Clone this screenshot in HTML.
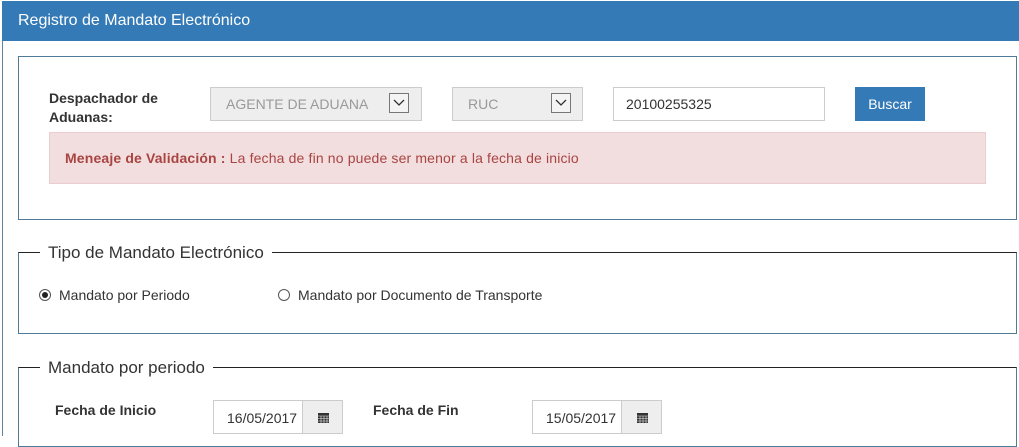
<!DOCTYPE html>
<html><head><meta charset="utf-8"><style>
*{box-sizing:border-box;margin:0;padding:0}
body{width:1019px;height:436px;overflow:hidden;background:#fff;font-family:"Liberation Sans",sans-serif;font-size:14px;color:#333;position:relative}
.a{position:absolute}
.hdr{left:2px;top:1px;width:1017px;height:40px;background:#337ab7;color:#fff;font-size:16px;padding:11px 16px}
.lb{left:2px;top:41px;width:1px;height:395px;background:#5a86a8}
.box{border:1px solid #4f7b99}
.sel{background:#eee;border:1px solid #ccc;color:#999;font-size:14px;padding:8px 15px}
.arr{position:absolute;top:5px;width:20px;height:20px;border:1px solid #777;background:#f4f4f4}
.arr svg{display:block}
.fs{border:1px solid #4f7b99;border-top:1px solid #222}
.lg{background:#fff;font-size:17px;color:#333;padding:0 8px}
.inp{border:1px solid #ccc;background:#fff;font-size:14px;color:#333}
.cal{background:#eee;border:1px solid #ccc}
</style></head><body>
<div class="a hdr">Registro de Mandato Electrónico</div>
<div class="a lb"></div>
<div class="a box" style="left:18px;top:56px;width:999px;height:164px"></div>
<div class="a" style="left:49px;top:89px;font-weight:bold;font-size:14px;line-height:19px">Despachador de<br>Aduanas:</div>
<div class="a sel" style="left:210px;top:87px;width:212px;height:34px">AGENTE DE ADUANA<div class="arr" style="left:178px"><svg width="18" height="18"><path d="M4 6 L9 11 L14 6" fill="none" stroke="#333" stroke-width="1.3"/></svg></div></div>
<div class="a sel" style="left:452px;top:87px;width:131px;height:34px">RUC<div class="arr" style="left:98px"><svg width="18" height="18"><path d="M4 6 L9 11 L14 6" fill="none" stroke="#333" stroke-width="1.3"/></svg></div></div>
<div class="a inp" style="left:613px;top:87px;width:212px;height:34px;padding:8px 12px">20100255325</div>
<div class="a" style="left:855px;top:87px;width:70px;height:34px;background:#337ab7;color:#fff;font-size:14px;text-align:center;line-height:34px">Buscar</div>
<div class="a" style="left:49px;top:132px;width:937px;height:52px;background:#f2dede;border:1px solid #ebccd1;color:#a94442;padding:17px 15px;font-size:14px;letter-spacing:0.15px;white-space:nowrap"><b>Meneaje de Validación :</b> La fecha de fin no puede ser menor a la fecha de inicio</div>

<div class="a fs" style="left:18px;top:252px;width:999px;height:82px"></div>
<div class="a lg" style="left:40px;top:243px">Tipo de Mandato Electrónico</div>
<div class="a" style="left:38px;top:288px"><svg width="14" height="14"><circle cx="7" cy="7" r="5.5" fill="#fff" stroke="#555"/><circle cx="7" cy="7" r="3" fill="#222"/></svg></div>
<div class="a" style="left:59px;top:287px;font-size:14px">Mandato por Periodo</div>
<div class="a" style="left:277px;top:288px"><svg width="14" height="14"><circle cx="7" cy="7" r="5.5" fill="#fff" stroke="#555"/></svg></div>
<div class="a" style="left:298px;top:287px;font-size:14px">Mandato por Documento de Transporte</div>

<div class="a fs" style="left:18px;top:367px;width:999px;height:80px"></div>
<div class="a lg" style="left:40px;top:358px">Mandato por periodo</div>
<div class="a" style="left:55px;top:402px;font-weight:bold">Fecha de Inicio</div>
<div class="a inp" style="left:213px;top:400px;width:90px;height:34px;padding:9px 0 0 13px;font-size:14px">16/05/2017</div>
<div class="a cal" style="left:302px;top:400px;width:41px;height:34px"><svg width="41" height="34"><rect x="15" y="12" width="11" height="10" fill="#333"/><path d="M15 15h11M15 17.5h11M15 20h11M18 15v7M21 15v7M24 15v7" stroke="#eee" stroke-width=".6"/></svg></div>
<div class="a" style="left:373px;top:402px;font-weight:bold">Fecha de Fin</div>
<div class="a inp" style="left:532px;top:400px;width:90px;height:34px;padding:9px 0 0 13px;font-size:14px">15/05/2017</div>
<div class="a cal" style="left:621px;top:400px;width:41px;height:34px"><svg width="41" height="34"><rect x="15" y="12" width="11" height="10" fill="#333"/><path d="M15 15h11M15 17.5h11M15 20h11M18 15v7M21 15v7M24 15v7" stroke="#eee" stroke-width=".6"/></svg></div>
</body></html>
